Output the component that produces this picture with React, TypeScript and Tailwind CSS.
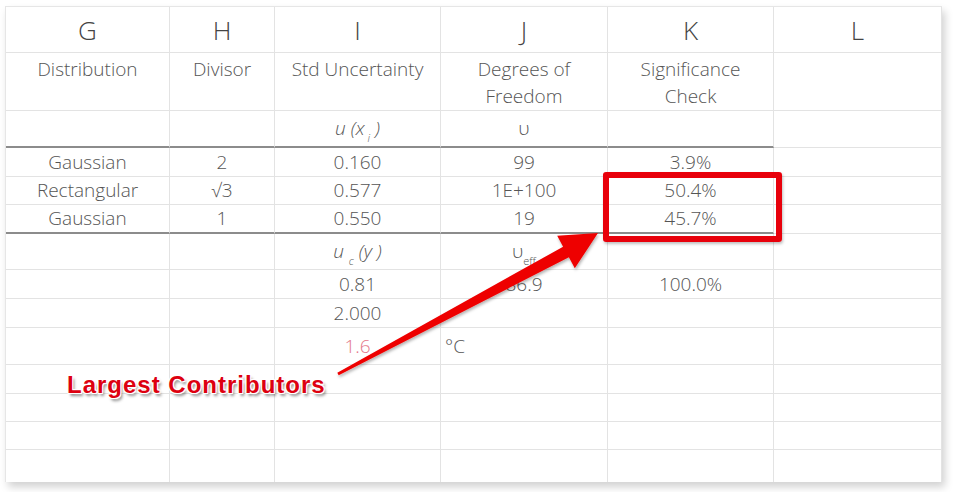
import React from "react";

type Row = {
  h: number;
  cells: React.ReactNode[];
  kind?: "letters" | "top";
  rule?: boolean;
};

const Ux = () => (
  <span className="italic">
    u (x<sub className="text-[11px] align-[-4px] ml-[3px]">i</sub> )
  </span>
);

const Uc = () => (
  <span className="italic">
    u <sub className="text-[11px] align-[-4px]">c</sub> (y )
  </span>
);

const Ueff = () => (
  <span>
    υ<sub className="text-[11px] align-[-4px]">eff</sub>
  </span>
);

const rows: Row[] = [
  { h: 46, kind: "letters", cells: ["G", "H", "I", "J", "K", "L"] },
  {
    h: 58,
    kind: "top",
    cells: [
      "Distribution",
      "Divisor",
      "Std Uncertainty",
      <>
        Degrees of
        <br />
        Freedom
      </>,
      <>
        Significance
        <br />
        Check
      </>,
      "",
    ],
  },
  { h: 37, rule: true, cells: ["", "", <Ux />, "υ", "", ""] },
  { h: 29, cells: ["Gaussian", "2", "0.160", "99", "3.9%", ""] },
  { h: 28, cells: ["Rectangular", "√3", "0.577", "1E+100", "50.4%", ""] },
  { h: 29, rule: true, cells: ["Gaussian", "1", "0.550", "19", "45.7%", ""] },
  { h: 36, cells: ["", "", <Uc />, <Ueff />, "", ""] },
  { h: 29, cells: ["", "", "0.81", "86.9", "100.0%", ""] },
  { h: 29, cells: ["", "", "2.000", "", "", ""] },
  {
    h: 37,
    cells: [
      "",
      "",
      <span className="text-[#e4788a]">1.6</span>,
      <span className="self-center mr-auto pl-[4px]">°C</span>,
      "",
      "",
    ],
  },
  { h: 29, cells: ["", "", "", "", "", ""] },
  { h: 28, cells: ["", "", "", "", "", ""] },
  { h: 28, cells: ["", "", "", "", "", ""] },
  { h: 33, cells: ["", "", "", "", "", ""] },
];

export default function App() {
  return (
    <div className="relative w-[964px] h-[492px] bg-white overflow-hidden pt-[6px] pl-[5px] font-['Open_Sans',sans-serif] font-[350] text-[#555555]">
      <div className="w-[937px] h-[476px] bg-white border-l border-t border-[#e6e6e6] shadow-[3px_5px_8px_rgba(0,0,0,0.18)] flex flex-col overflow-hidden">
        {rows.map((row, ri) => (
          <div
            key={ri}
            className="grid grid-cols-[164px_105px_166px_167px_166px_168px] shrink-0"
            style={{ height: row.h }}
          >
            {row.cells.map((c, ci) => {
              const ruled = row.rule && ci < 5;
              return (
                <div
                  key={ci}
                  className={[
                    "flex justify-center border-r border-[#e3e3e3] text-center",
                    ruled
                      ? "border-b-2 border-b-[#8c8c8c]"
                      : "border-b border-b-[#e3e3e3]",
                    row.kind === "letters"
                      ? "items-center text-[26px] text-[#444444] pt-[2px]"
                      : row.kind === "top"
                        ? "items-start pt-[3px] text-[19px] leading-[27px]"
                        : "items-center text-[19px] leading-none",
                  ].join(" ")}
                >
                  {c}
                </div>
              );
            })}
          </div>
        ))}
      </div>

      <div className="absolute left-[603px] top-[172px] w-[179px] h-[70px] border-[6px] border-[#e8000b] rounded-[3px] shadow-[1px_2px_3px_rgba(0,0,0,0.25)]" />

      <svg
        className="absolute left-0 top-0 pointer-events-none"
        width="964"
        height="492"
        viewBox="0 0 964 492"
      >
        <defs>
          <filter id="ash" x="-10%" y="-10%" width="120%" height="130%">
            <feDropShadow dx="1" dy="2" stdDeviation="1.5" floodColor="#000" floodOpacity="0.3" />
          </filter>
        </defs>
        <polygon
          points="337.3,372.7 563.1,246.7 557.2,235.7 598,233 574.8,268.3 568.9,257.3 338.7,375.3"
          fill="#ee0000"
          filter="url(#ash)"
        />
      </svg>

      <div className="absolute left-[67px] top-[373px] font-['Liberation_Sans',Arial,sans-serif] font-bold text-[24px] leading-none tracking-[1px] text-[#dd0010] [text-shadow:-1px_-1px_0_#fff,1px_-1px_0_#fff,-1px_1px_0_#fff,1px_1px_0_#fff,0_-1px_0_#fff,0_1px_0_#fff,2px_3px_3px_rgba(0,0,0,0.45)]">
        Largest Contributors
      </div>
    </div>
  );
}
